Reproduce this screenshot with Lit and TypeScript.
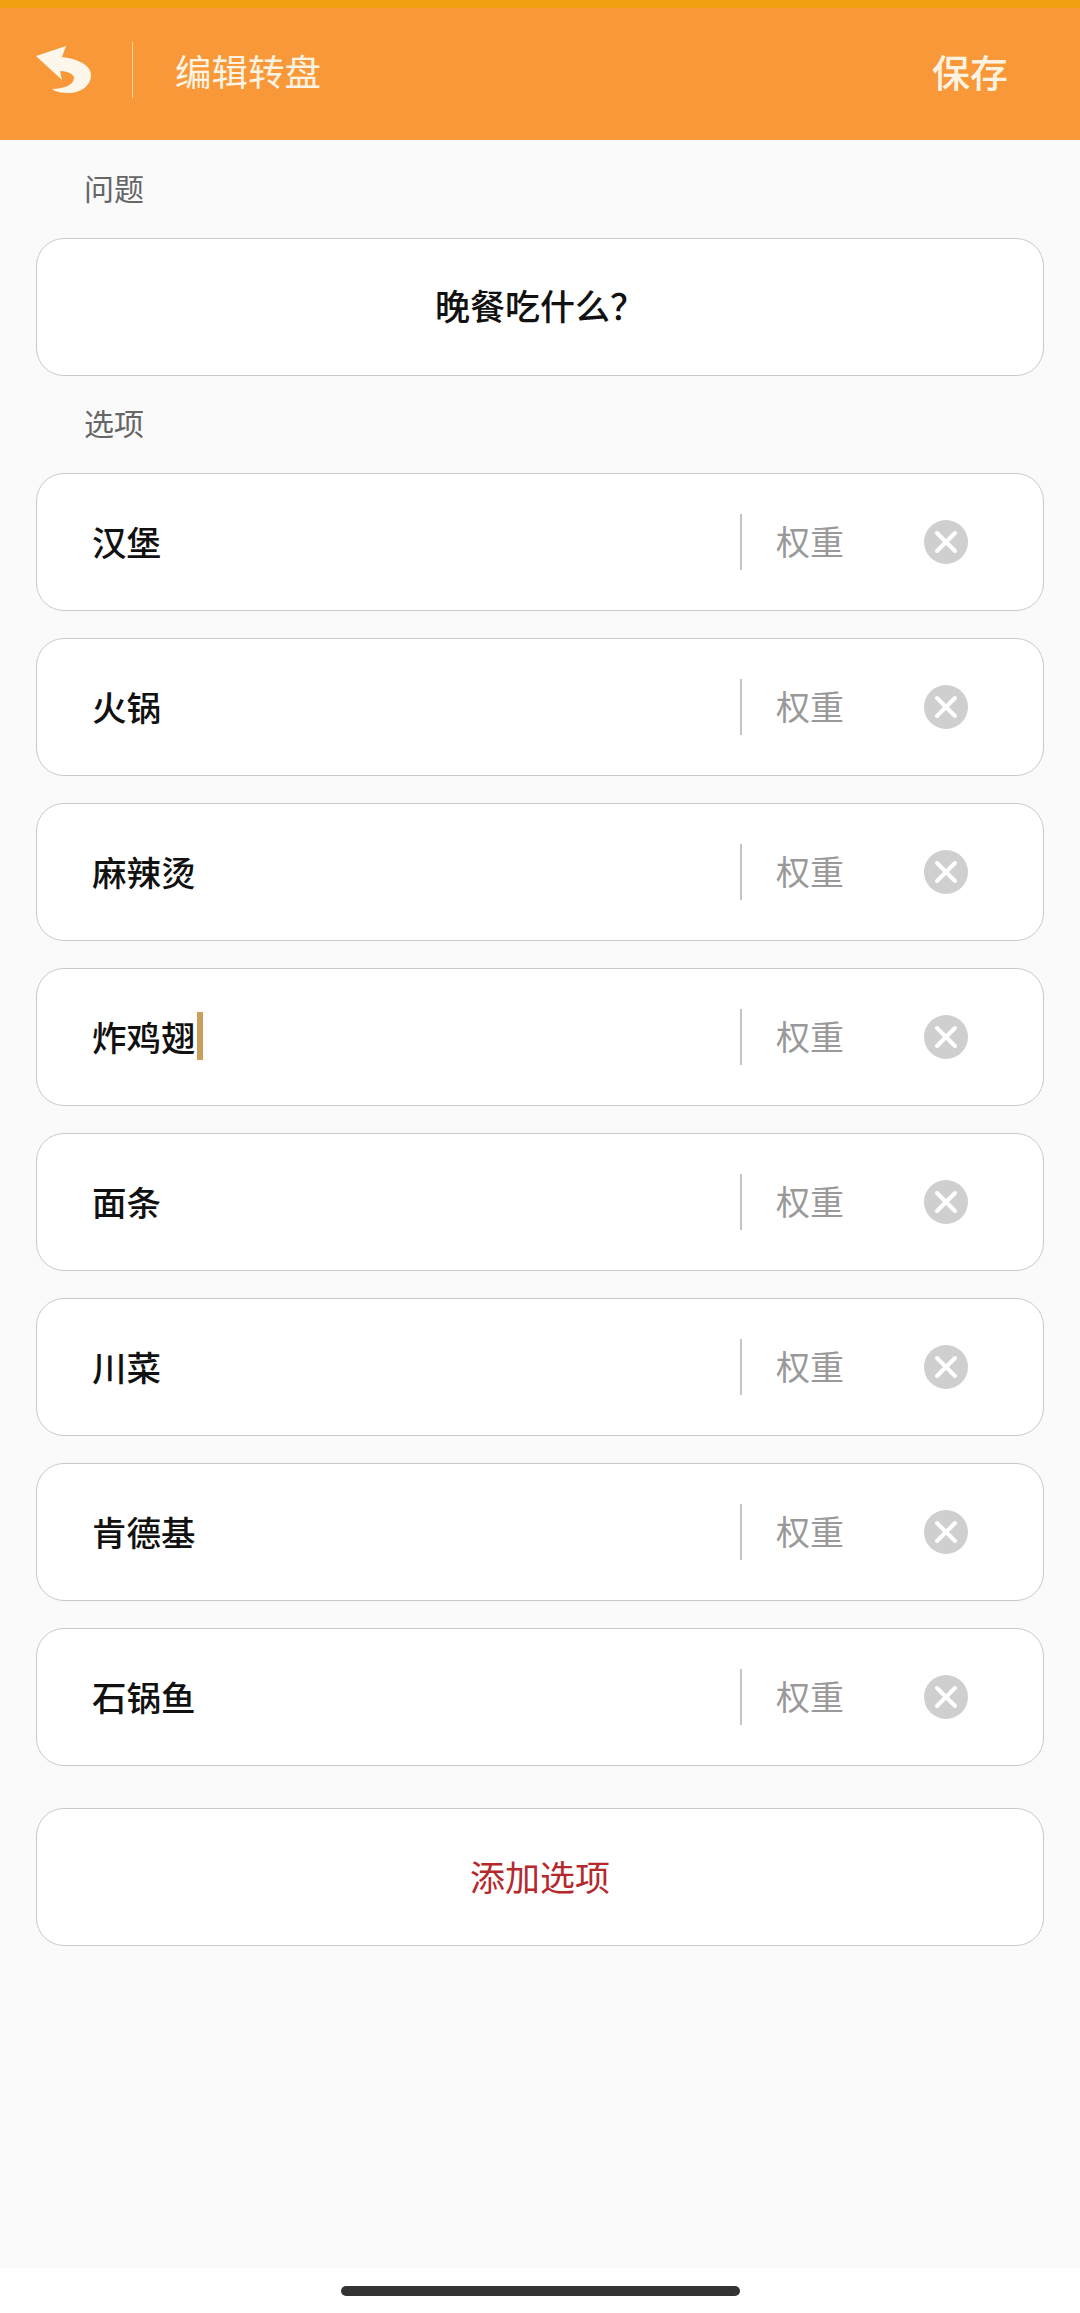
import { LitElement, html, css } from 'lit';
import { customElement } from 'lit/decorators.js';

const OPTIONS = ['汉堡', '火锅', '麻辣烫', '炸鸡翅', '面条', '川菜', '肯德基', '石锅鱼'];
const FOCUSED = '炸鸡翅';

@customElement('app-root')
export class AppRoot extends LitElement {
  static styles = css`
    :host {
      display: flex;
      flex-direction: column;
      width: 1080px;
      height: 2313px;
      background: #fafafa;
      font-family: "Noto Sans CJK SC", "Liberation Sans", sans-serif;
      overflow: hidden;
    }
    .top-strip {
      height: 8px;
      background: #f0a010;
    }
    .header {
      display: flex;
      align-items: center;
      height: 132px;
      padding: 0 72px 0 36px;
      background: #f99839;
      color: #fdf3e2;
    }
    .back {
      width: 56px;
      height: 50px;
      margin-top: -8px;
    }
    .header-divider {
      width: 1px;
      height: 56px;
      margin: -8px 42px 0 40px;
      background: #fcd79a;
    }
    .title {
      flex: 1;
      font-size: 36.5px;
      line-height: 50px;
      margin-top: -6px;
    }
    .save {
      font-size: 38px;
      line-height: 50px;
      font-weight: 500;
      margin-top: -6px;
    }
    .content {
      flex: 1;
      display: flex;
      flex-direction: column;
      padding: 0 36px;
    }
    .label {
      height: 40px;
      margin: 27px 0 0 48px;
      font-size: 30px;
      line-height: 40px;
      color: #666;
    }
    .card {
      box-sizing: border-box;
      display: flex;
      align-items: center;
      height: 138px;
      background: #fff;
      border: 1.5px solid #c9c9c9;
      border-radius: 28px;
    }
    .question {
      justify-content: center;
      margin-top: 31px;
      padding-bottom: 5px;
      font-size: 35px;
      font-weight: 500;
      color: #111;
    }
    .options {
      display: flex;
      flex-direction: column;
      gap: 27px;
      margin-top: 31px;
    }
    .options-label {
      margin-top: 26px;
    }
    .row {
      padding: 0 0 0 55px;
    }
    .name {
      display: flex;
      align-items: center;
      flex: 1;
      padding-bottom: 3px;
      font-size: 34.5px;
      font-weight: 500;
      line-height: 48px;
      color: #111;
    }
    .caret {
      width: 6px;
      height: 48px;
      margin-left: 1px;
      background: #c99f5c;
    }
    .row-divider {
      width: 2px;
      height: 56px;
      background: #c4c4c4;
    }
    .weight {
      width: 68px;
      margin: 0 80px 3px 34px;
      font-size: 34px;
      color: #999;
    }
    .remove {
      width: 44px;
      height: 44px;
      margin-right: 75px;
    }
    .add {
      justify-content: center;
      margin-top: 42px;
      padding-bottom: 3px;
      font-size: 35px;
      color: #b5282c;
    }
    .home-area {
      display: flex;
      justify-content: center;
      height: 45px;
      background: #fff;
    }
    .home-bar {
      width: 399px;
      height: 10px;
      margin-top: 18px;
      border-radius: 5px;
      background: #333;
    }
  `;

  private renderRow(name: string) {
    return html`
      <div class="card row">
        <div class="name">
          ${name}${name === FOCUSED ? html`<span class="caret"></span>` : ''}
        </div>
        <div class="row-divider"></div>
        <div class="weight">权重</div>
        <svg class="remove" viewBox="0 0 44 44">
          <circle cx="22" cy="22" r="22" fill="#cfcfcf" />
          <path d="M13 13L31 31M31 13L13 31" stroke="#fff" stroke-width="4" stroke-linecap="round" />
        </svg>
      </div>
    `;
  }

  render() {
    return html`
      <div class="top-strip"></div>
      <div class="header">
        <svg class="back" viewBox="0 0 56 50">
          <path
            fill="#fdf6ea"
            d="M0 11L30 1L26 12C42 14 55 20 55 30C55 41 44 48 33 48C26 48 20 47 16 44C27 44 38 40 38 33C38 29 31 26 24 26L26 35Z"
          />
        </svg>
        <div class="header-divider"></div>
        <div class="title">编辑转盘</div>
        <div class="save">保存</div>
      </div>
      <div class="content">
        <div class="label">问题</div>
        <div class="card question">晚餐吃什么？</div>
        <div class="label options-label">选项</div>
        <div class="options">${OPTIONS.map((o) => this.renderRow(o))}</div>
        <div class="card add">添加选项</div>
      </div>
      <div class="home-area"><div class="home-bar"></div></div>
    `;
  }
}
